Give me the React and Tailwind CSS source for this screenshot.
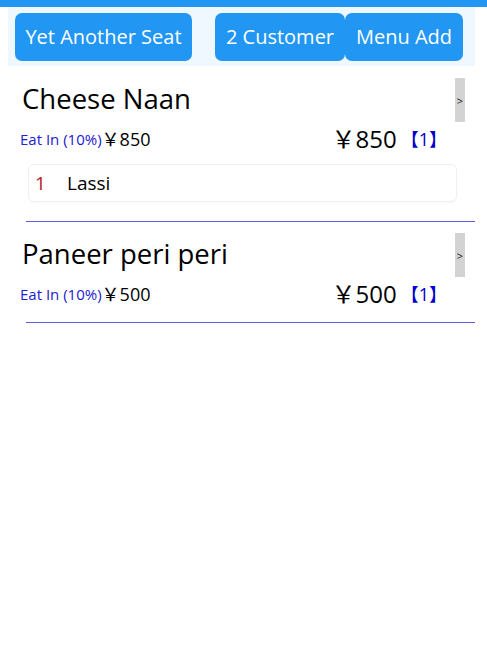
import React from 'react';

const items = [
  { name: 'Cheese Naan', price: 850, qty: 1, toppings: [{ qty: 1, name: 'Lassi' }] },
  { name: 'Paneer peri peri', price: 500, qty: 1, toppings: [] },
];

function OrderItem({ item }) {
  return (
    <div className="ml-[8px] w-[467px] pt-[11px]">
      {/* title row */}
      <div className="flex h-[44px] items-center justify-between pl-[14px] pr-[10px]">
        <span className="-mt-[3px] text-[27.5px] leading-none text-black">{item.name}</span>
        <button className="flex h-[44px] w-[10px] items-center justify-center bg-[#d3d3d3] text-[11px] leading-none text-[#222]">
          &gt;
        </button>
      </div>

      {/* price row */}
      <div className="mt-[6px] flex h-[22px] items-center justify-between pl-[12px] pr-[28px]">
        <div className="flex items-center">
          <span className="text-[15px] text-[#2020d0]">Eat In (10%)</span>
          <span className="text-[18px] text-black">￥{item.price}</span>
        </div>
        <div className="flex items-center">
          <span className="text-[24px] leading-none text-black">￥{item.price}</span>
          <span className="ml-[4px] text-[18px] leading-none text-[#0000cd]">【{item.qty}】</span>
        </div>
      </div>

      {item.toppings.map((t, i) => (
        <div
          key={i}
          className="ml-[20px] mt-[14px] flex h-[38px] w-[429px] items-center rounded-[6px] border border-[#f0f0f0] shadow-[0_1px_2px_rgba(0,0,0,0.03)]"
        >
          <span className="ml-[6px] w-[32px] text-[19px] text-[#b22222]">{t.qty}</span>
          <span className="text-[19px] text-black">{t.name}</span>
        </div>
      ))}

      <div className={item.toppings.length ? 'mt-[19px]' : 'mt-[17px]'} />
      <div className="ml-[18px] h-px bg-[#5c5cd6]" />
    </div>
  );
}

export default function App() {
  return (
    <div className="min-h-[647px] w-[487px] bg-white font-['Open_Sans','Noto_Sans_CJK_JP',sans-serif]">
      <div className="h-[7px] bg-[#2196f3]" />

      {/* header buttons */}
      <div className="ml-[8px] flex h-[59px] w-[467px] items-center bg-[#f0f8ff] pl-[7px]">
        <button className="h-[48px] w-[177px] rounded-[7px] bg-[#2196f3] text-[20px] text-white">
          Yet Another Seat
        </button>
        <button className="ml-[23px] h-[48px] w-[130px] rounded-[7px] bg-[#2196f3] text-[20px] text-white">
          2 Customer
        </button>
        <button className="h-[48px] w-[118px] rounded-[7px] bg-[#2196f3] text-[20px] text-white">
          Menu Add
        </button>
      </div>

      <div className="pt-[1px]">
        {items.map((item, i) => (
          <OrderItem key={i} item={item} />
        ))}
      </div>
    </div>
  );
}
